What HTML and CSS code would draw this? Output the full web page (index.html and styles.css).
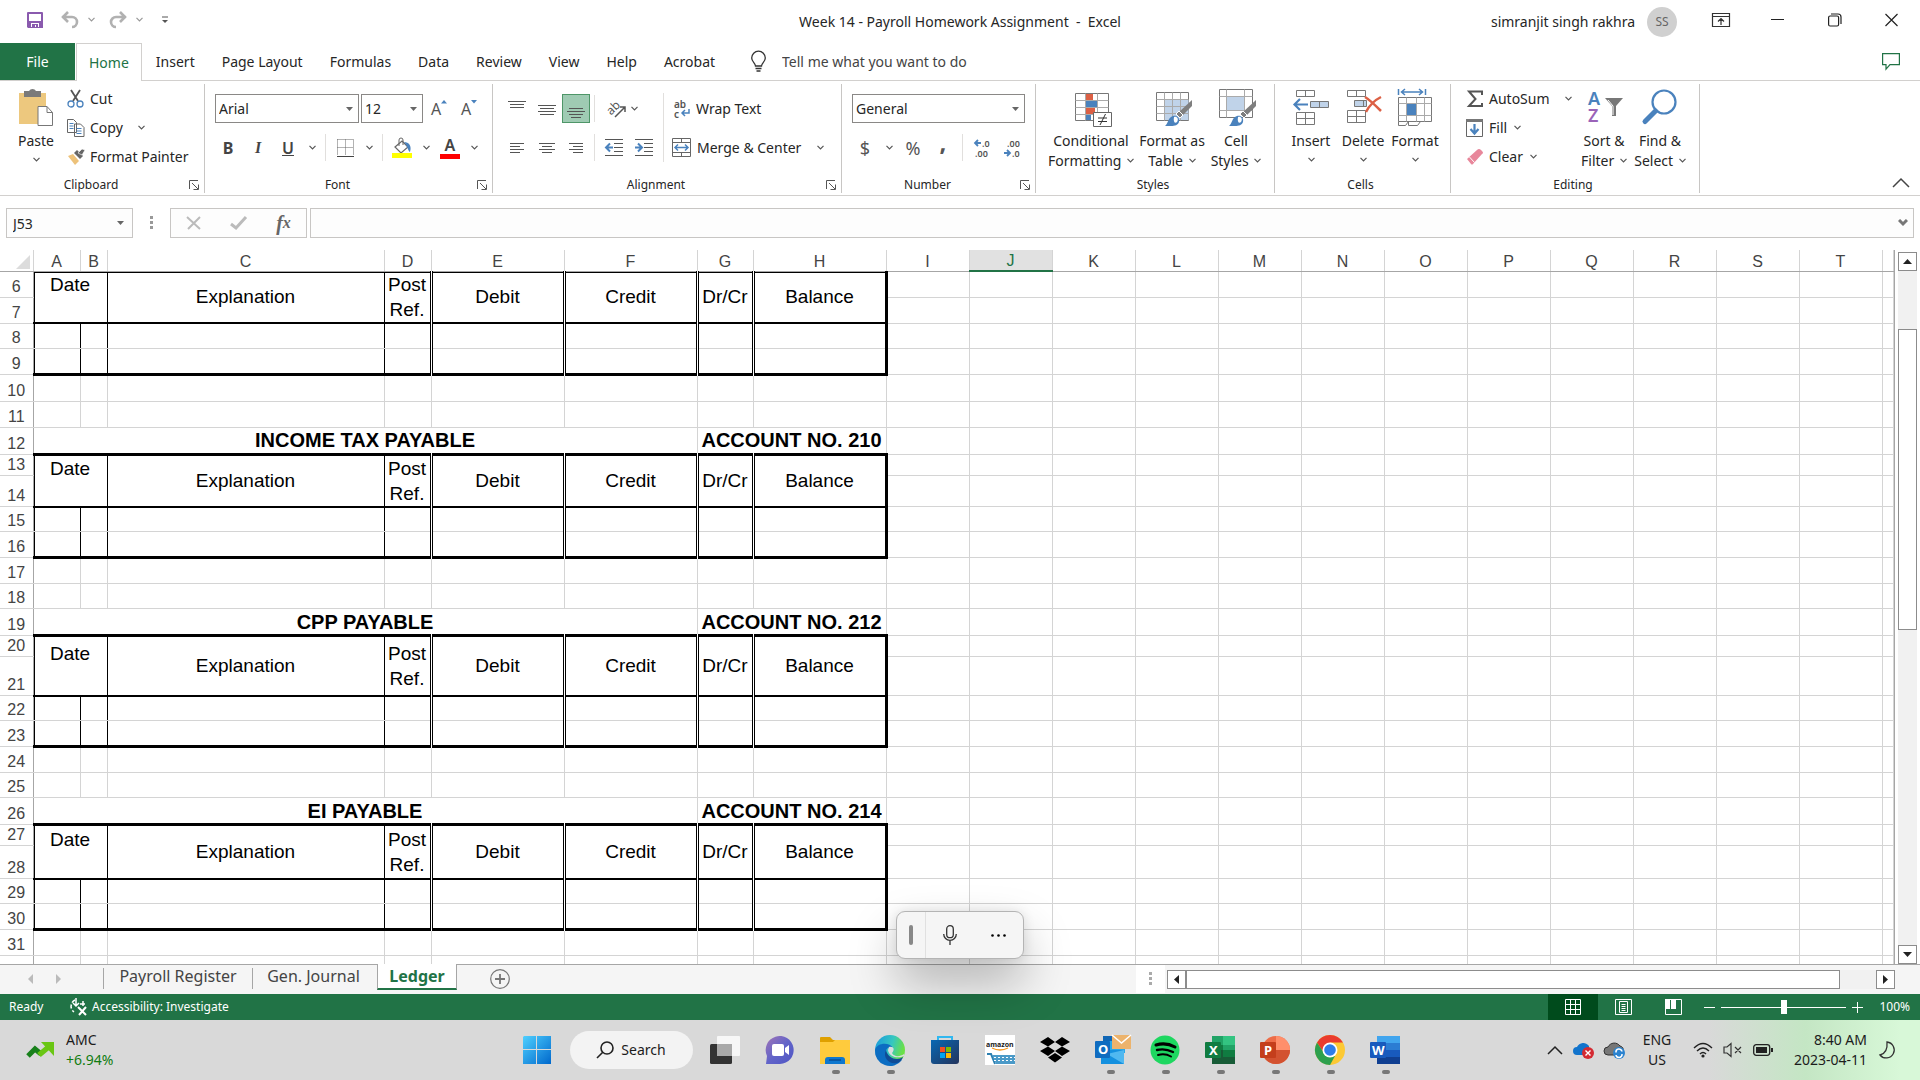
FILE: index.html
```html
<!DOCTYPE html>
<html lang="en">
<head>
<meta charset="utf-8">
<title>Week 14 - Payroll Homework Assignment - Excel</title>
<link rel="stylesheet" href="styles.css">
</head>
<body>
<svg class="defs" aria-hidden="true">
  <symbol id="caret" viewBox="0 0 7 5"><path d="M.5 .8l3 3 3-3" fill="none" stroke="#555" stroke-width="1.2"/></symbol>
  <symbol id="launch" viewBox="0 0 10 10"><path d="M.5 9V.5H9M3 3l6 6M9.500 4.500v5h-5" fill="none" stroke="#555"/></symbol>
  <symbol id="brush" viewBox="0 0 28 28"><path d="M27 1v6l-9 9-4-3z" fill="#7f7f7f"/><path d="M14 12l4 4-3 3-4-4z" fill="#7f7f7f" stroke="#fff"/><path d="M0 27c3-2 3-9 8-10 4-1 7 2 6 6-1 3-4 4-8 4z" fill="#4a82bd"/><path d="M9 18c3-1 5 2 3 5-2 2-4 0-3-5z" fill="#fff"/></symbol>
</svg>

<div class="app">
<header class="titlebar">
  <div class="quick">
    <button class="ib save" aria-label="Save"><svg width="16" height="16"><path d="M0 1a1 1 0 0 1 1-1h14a1 1 0 0 1 1 1v15H1l-1-1z" fill="#8a5aae"/><path d="M2 2h12v7H2zM4 11h8v4H4z" fill="#fff"/><path d="M5 12h6v3H9v-2H8v2H5z" fill="#8a5aae"/></svg></button>
    <button class="ib undo" aria-label="Undo"><svg width="18" height="16"><path d="M1 5h10a5 5 0 0 1 0 10M7 0L2 5l5 5" fill="none" stroke="#b1b1b1" stroke-width="2.600"/></svg><svg class="caret pale"><use href="#caret"/></svg></button>
    <button class="ib redo" aria-label="Redo"><svg width="18" height="16"><path d="M17 5H7a5 5 0 0 0 0 10M11 0l5 5-5 5" fill="none" stroke="#b1b1b1" stroke-width="2.600"/></svg><svg class="caret pale"><use href="#caret"/></svg></button>
    <button class="ib" aria-label="Customize toolbar"><svg width="6" height="8"><path d="M0 1h6" stroke="#555"/><path d="M0 4h6L3 7z" fill="#555"/></svg></button>
  </div>
  <h1 class="doc">Week 14 - Payroll Homework Assignment&nbsp; -&nbsp; Excel</h1>
  <div class="account"><span>simranjit singh rakhra</span><span class="avatar">SS</span></div>
  <div class="wins">
    <button aria-label="Ribbon display"><svg width="18" height="14"><path d="M.5.5h17v13H.5zM.5 3.500h17M9 12V6M6 8.500L9 5.500l3 3" fill="none" stroke="#333" stroke-width="1.200"/></svg></button>
    <button aria-label="Minimize"><svg width="13" height="14"><path d="M0 6.500h13" stroke="#222"/></svg></button>
    <button aria-label="Restore"><svg width="14" height="14"><rect x=".6" y="3" width="10" height="10" rx="1.500" fill="none" stroke="#222" stroke-width="1.200"/><path d="M3 1h7q3 0 3 3v7" fill="none" stroke="#222" stroke-width="1.200"/></svg></button>
    <button aria-label="Close"><svg width="13" height="14"><path d="M.5 1l12 12M12.500 1l-12 12" stroke="#222" stroke-width="1.200"/></svg></button>
  </div>
</header>

<nav class="tabs">
  <button class="file">File</button>
  <button class="on">Home</button><button>Insert</button><button>Page Layout</button><button>Formulas</button><button>Data</button><button>Review</button><button>View</button><button>Help</button><button>Acrobat</button>
  <label class="tell"><svg width="15" height="21"><path d="M4.500 15c0-3-3.800-4-3.800-8A6.700 6.700 0 0 1 14.300 7c0 4-3.800 5-3.800 8zM4.500 17.500h6M5.500 20h4" fill="none" stroke="#333" stroke-width="1.300"/></svg><input type="text" placeholder="Tell me what you want to do" aria-label="Tell me what you want to do"></label>
  <button class="comment" aria-label="Comments"><svg width="18" height="17"><path d="M.6.600h16.800v11H8l-4 4.500v-4.500H.6z" fill="none" stroke="#217346" stroke-width="1.200"/></svg></button>
</nav>

<section class="ribbon">
  <div class="group clip">
    <div class="body">
      <button class="big paste"><svg width="36" height="40"><path d="M1 5h27v31H1z" fill="#edc87e"/><path d="M6 3h5a4 4 0 0 1 7 0h5v6H6z" fill="#7a7a7a"/><path d="M20 18.500h9l5.500 6V37.500H20z" fill="#fff" stroke="#777"/><path d="M29 18.500v6h5.500" fill="none" stroke="#777"/></svg><span>Paste</span><svg class="caret"><use href="#caret"/></svg></button>
      <div class="stack">
        <button><svg width="18" height="18"><path d="M4 0l7 11M13 0L6 11" stroke="#555" stroke-width="1.800"/><circle cx="4" cy="14" r="3" fill="none" stroke="#4a82bd" stroke-width="1.300"/><circle cx="13" cy="14" r="3" fill="none" stroke="#4a82bd" stroke-width="1.300"/></svg>Cut</button>
        <button><svg width="18" height="18"><path d="M.5.500h6l3 3v10h-9zM7.500 5h6l3.500 3.500v9H7.500z" fill="#fff" stroke="#666"/><path d="M2.500 4.500h4M2.500 7h4M2.500 9.500h4M9.500 9.500h5M9.500 12h5M9.500 14.500h5" stroke="#4a82bd"/></svg>Copy<svg class="caret far"><use href="#caret"/></svg></button>
        <button><svg width="18" height="18"><path d="M1 8l5-2 6 7-4 4z" fill="#edc27a"/><path d="M7 5l3-3 6 6-3 3z" fill="#666"/><path d="M11 5l4-4 3 1-3 5z" fill="#666" stroke="#fff" stroke-width=".6"/></svg>Format Painter</button>
      </div>
    </div>
    <footer>Clipboard<svg class="launch"><use href="#launch"/></svg></footer>
  </div>

  <div class="group font">
    <div class="body rows">
      <div class="line combos">
        <select class="face" aria-label="Font"><option>Arial</option></select>
        <select class="size" aria-label="Font size"><option>12</option></select>
        <button class="ab">A<svg width="6" height="4"><path d="M0 3.500L3 0l3 3.500z" fill="#4a82bd"/></svg></button>
        <button class="ab">A<svg width="6" height="4"><path d="M0 0h6L3 3.500z" fill="#4a82bd"/></svg></button>
      </div>
      <div class="line marks">
        <button class="w30"><b>B</b></button><button class="w30"><i>I</i></button><button class="w30"><u>U</u></button><button class="w18" aria-label="Underline options"><svg class="caret"><use href="#caret"/></svg></button>
        <span class="sep"></span>
        <button class="w30" aria-label="Borders"><svg width="17" height="18"><path d="M.5.500h16v16M.5.500v16M8.500.500v16M.5 8.500h16" fill="none" stroke="#666" stroke-dasharray="1 1"/><path d="M0 17.500h17" stroke="#444"/></svg></button><button class="w18" aria-label="Border options"><svg class="caret"><use href="#caret"/></svg></button>
        <span class="sep"></span>
        <button class="w30" aria-label="Fill colour"><svg width="20" height="20"><path d="M3 9l7-6 6 6-7 6z" fill="#fff" stroke="#666" stroke-width="1.200"/><path d="M7 8V2a2 2 0 0 1 4 0v5" fill="none" stroke="#666"/><path d="M12 4c5 0 8 4 6 10-2-1-2-5-6-10z" fill="#4a82bd"/><path d="M0 15h20v5H0z" fill="#ff0"/></svg></button><button class="w18" aria-label="Fill colour options"><svg class="caret"><use href="#caret"/></svg></button>
        <button class="colour">A</button><button class="w18" aria-label="Font colour options"><svg class="caret"><use href="#caret"/></svg></button>
      </div>
    </div>
    <footer>Font<svg class="launch"><use href="#launch"/></svg></footer>
  </div>

  <div class="group align">
    <div class="body">
      <div class="rows">
        <div class="line">
          <button class="w30" aria-label="Top align"><svg width="18" height="18"><path d="M0 1.500h18M2 4.500h14M2 7.500h14" stroke="#555"/></svg></button><button class="w30" aria-label="Middle align"><svg width="18" height="18"><path d="M0 5.500h18M2 8.500h14M0 11.500h18M2 14.500h14" stroke="#555"/></svg></button><button class="w28 sel" aria-label="Bottom align"><svg width="18" height="18"><path d="M2 8.500h14M0 11.500h18M2 14.500h14M4 17.500h10" stroke="#555"/></svg></button>
          <span class="sep"></span>
          <button class="w46" aria-label="Orientation"><svg width="18" height="18"><text x="-1" y="12" transform="rotate(-45 6 8)" class="rot">ab</text><path d="M8 17L18 7M13 7h5v5" fill="none" stroke="#555" stroke-width="1.500"/></svg><svg class="caret"><use href="#caret"/></svg></button>
        </div>
        <div class="line">
          <button class="w30" aria-label="Align left"><svg width="14" height="12"><path d="M0 1.500h14M0 4.500h10M0 7.500h14M0 10.500h10" stroke="#555"/></svg></button><button class="w30" aria-label="Center"><svg width="16" height="12"><path d="M0 1.500h16M3 4.500h10M0 7.500h16M3 10.500h10" stroke="#555"/></svg></button><button class="w28" aria-label="Align right"><svg width="14" height="12"><path d="M0 1.500h14M4 4.500h10M0 7.500h14M4 10.500h10" stroke="#555"/></svg></button>
          <span class="sep"></span>
          <button class="w30" aria-label="Decrease indent"><svg width="18" height="17"><path d="M0 .5h18M9 4.500h9M9 8.500h9M9 12.500h9M0 16.500h18" stroke="#555"/><path d="M1 8.500h7M5 4.500l-4 4 4 4" fill="none" stroke="#4a82bd" stroke-width="2"/></svg></button><button class="w30" aria-label="Increase indent"><svg width="18" height="17"><path d="M0 .5h18M9 4.500h9M9 8.500h9M9 12.500h9M0 16.500h18" stroke="#555"/><path d="M0 8.500h7M3 4.500l4 4-4 4" fill="none" stroke="#4a82bd" stroke-width="2"/></svg></button>
        </div>
      </div>
      <span class="sep tall"></span>
      <div class="rows wide">
        <div class="line"><button class="txt"><svg width="18" height="18"><text x="2" y="8" class="sm">ab</text><text x="2" y="18" class="sm">c</text><path d="M17 9v4h-6M13 10l-3 3 3 3" fill="none" stroke="#4a82bd" stroke-width="1.500"/></svg>Wrap Text</button></div>
        <div class="line"><button class="txt"><svg width="19" height="19"><path d="M.5.500h18v18H.5zM.5 4.500h18M.5 14.500h18M9.500.500v4M9.500 14.500v4" fill="none" stroke="#666"/><path d="M3 9.500h13M6 6.500l-3 3 3 3M13 6.500l3 3-3 3" fill="none" stroke="#4a82bd" stroke-width="1.500"/></svg>Merge &amp; Center<svg class="caret far"><use href="#caret"/></svg></button></div>
      </div>
    </div>
    <footer>Alignment<svg class="launch"><use href="#launch"/></svg></footer>
  </div>

  <div class="group number">
    <div class="body rows">
      <div class="line combos"><select class="fmt" aria-label="Number format"><option>General</option></select></div>
      <div class="line glyphs">
        <button class="w30">$</button><button class="w18" aria-label="Currency options"><svg class="caret"><use href="#caret"/></svg></button><button class="w30">%</button><button class="w30 comma">,</button>
        <span class="sep"></span>
        <button class="w30" aria-label="Increase decimal"><svg width="16" height="18"><text x="8" y="8" class="dec">.0</text><text x="1" y="18" class="dec">.00</text><path d="M1 4h6M4 1L1 4l3 3" fill="none" stroke="#4a82bd" stroke-width="1.800"/></svg></button><button class="w30" aria-label="Decrease decimal"><svg width="16" height="18"><text x="3" y="8" class="dec">.00</text><text x="8" y="18" class="dec">.0</text><path d="M0 14h6M3 11l3 3-3 3" fill="none" stroke="#4a82bd" stroke-width="1.800"/></svg></button>
      </div>
    </div>
    <footer>Number<svg class="launch"><use href="#launch"/></svg></footer>
  </div>

  <div class="group styles">
    <div class="body">
      <button class="big w90"><svg width="38" height="40"><path d="M3.500 5.500h33v27h-33z" fill="#fff" stroke="#777"/><path d="M3.500 12.500h33M3.500 19.500h33M3.500 26.500h33M13.500 5.500v27M25.500 5.500v27" stroke="#aaa"/><path d="M14 6h7v6h-7zM14 20h9v6h-9z" fill="#dc6045"/><path d="M14 13h11v6H14zM14 27h5v5h-5z" fill="#4a82bd"/><path d="M21.500 24.500h18v14h-18z" fill="#fff" stroke="#666"/><path d="M26 30h9M26 33.500h9M33.500 26l-5.500 11" stroke="#333"/></svg><span>Conditional</span><span>Formatting <svg class="caret"><use href="#caret"/></svg></span></button>
      <button class="big w72"><svg width="38" height="40"><path d="M3.500 4.500h32v28h-32z" fill="#fff" stroke="#777"/><path d="M11.500 12h24v20h-24z" fill="#c0d3e9"/><path d="M3.500 11.500h32M3.500 18.500h32M3.500 25.500h32M11.500 4.500v28M19.500 4.500v28M27.500 4.500v28" stroke="#aaa"/><use href="#brush" x="12" y="11" width="28" height="28"/></svg><span>Format as</span><span>Table <svg class="caret"><use href="#caret"/></svg></span></button>
      <button class="big w56"><svg width="38" height="40"><path d="M2.500 1.500h33v28H2.500z" fill="#fff" stroke="#777"/><path d="M10 9h17v13H10z" fill="#c0d3e9"/><path d="M2.500 8.500h33M2.500 22.500h33M9.500 1.500v28M27.500 1.500v28" stroke="#aaa"/><use href="#brush" x="12" y="11" width="28" height="28"/></svg><span>Cell</span><span>Styles <svg class="caret"><use href="#caret"/></svg></span></button>
    </div>
    <footer>Styles</footer>
  </div>

  <div class="group cells">
    <div class="body">
      <button class="big w52"><svg width="38" height="40"><path d="M4.500 2.500h18v6h-18zM13.500 2.500v6M4.500 24.500h18v12h-18zM13.500 24.500v12M4.500 30.500h18" fill="#fff" stroke="#777"/><path d="M18.500 13.500h18v6h-18zM27.500 13.500v6" fill="#c0d3e9" stroke="#777"/><path d="M2 16.500h14M8 11l-5.500 5.500L8 22" fill="none" stroke="#4a82bd" stroke-width="2.200"/></svg><span>Insert</span><svg class="caret"><use href="#caret"/></svg></button>
      <button class="big w52"><svg width="38" height="40"><path d="M3.500 2.500h18v6h-18zM12.500 2.500v6M3.500 22.500h18v12h-18zM12.500 22.500v12M3.500 28.500h18" fill="#fff" stroke="#777"/><path d="M10.500 12.500h12v6h-12zM19.500 12.500v6" fill="#c0d3e9" stroke="#777"/><path d="M21 9c5 3 11 9 16 14M37 9c-6 3-12 9-15 15" fill="none" stroke="#dc6045" stroke-width="2.500"/></svg><span>Delete</span><svg class="caret"><use href="#caret"/></svg></button>
      <button class="big w52"><svg width="38" height="40"><path d="M2.500 9.500h33v24h-33z" fill="#fff" stroke="#777"/><path d="M2.500 15.500h33M2.500 27.500h33M10.500 9.500v24M20.500 9.500v24M28.500 9.500v24" stroke="#aaa"/><path d="M11 16h9v11h-9z" fill="#4a82bd"/><path d="M2.500 33.500v4h7l3-4v4h9l3-4" fill="none" stroke="#777"/><path d="M2.500 1v6M29.500 1v6M5 4h22M9 1L5.500 4 9 7M23 1l3.500 3L23 7" fill="none" stroke="#4a82bd" stroke-width="1.500"/></svg><span>Format</span><svg class="caret"><use href="#caret"/></svg></button>
    </div>
    <footer>Cells</footer>
  </div>

  <div class="group edit">
    <div class="body">
      <div class="stack">
        <button><svg width="18" height="18"><path d="M16 5V1.500H3l6.500 7.500L3 16h13v-3" fill="none" stroke="#555" stroke-width="2"/></svg>AutoSum<svg class="caret far"><use href="#caret"/></svg></button>
        <button><svg width="18" height="18"><path d="M.5.500h16v17H.5z" fill="#fff" stroke="#666"/><path d="M0 0h17v3H0z" fill="#777"/><path d="M8.500 5v9M4.500 10l4 4.500 4-4.500" fill="none" stroke="#4a82bd" stroke-width="2.200"/></svg>Fill<svg class="caret near"><use href="#caret"/></svg></button>
        <button><svg width="18" height="18"><path d="M1 11l10-9q2-2 4 0l1 1q2 2 0 3l-9 10q-1 1-2 0z" fill="#e8879b"/><path d="M3.500 9l5 5.500" stroke="#fff"/></svg>Clear<svg class="caret near"><use href="#caret"/></svg></button>
      </div>
      <button class="big w56"><svg width="38" height="40"><text x="3" y="17" class="az">A</text><text x="3" y="34" class="az zed">Z</text><path d="M20 10h18l-7 8v10h-4V18z" fill="#777"/><path d="M23 12l5 6v9" fill="none" stroke="#fff"/></svg><span>Sort &amp;</span><span>Filter <svg class="caret"><use href="#caret"/></svg></span></button>
      <button class="big w56"><svg width="38" height="40"><circle cx="23" cy="14" r="11.500" fill="none" stroke="#4a82bd" stroke-width="2.200"/><path d="M14.500 23L4 33.500" stroke="#4a82bd" stroke-width="5" stroke-linecap="round"/></svg><span>Find &amp;</span><span>Select <svg class="caret"><use href="#caret"/></svg></span></button>
    </div>
    <footer>Editing</footer>
  </div>
  <button class="collapse" aria-label="Collapse the ribbon"><svg width="18" height="10"><path d="M1 9l8-8 8 8" fill="none" stroke="#444" stroke-width="1.500"/></svg></button>
</section>

<section class="fbar">
  <input class="namebox" value="J53" aria-label="Name box">
  <svg width="3" height="14"><path d="M0 0h3v3H0zM0 5h3v3H0zM0 10h3v3H0z" fill="#999"/></svg>
  <div class="fx">
    <button aria-label="Cancel"><svg width="16" height="14"><path d="M1 1l13 12M14 1L2 13" stroke="#bbb" stroke-width="2"/></svg></button>
    <button aria-label="Enter"><svg width="17" height="14"><path d="M1 8l5 4L16 1" fill="none" stroke="#bbb" stroke-width="3"/></svg></button>
    <button aria-label="Insert function"><em>f</em><sub>x</sub></button>
  </div>
  <input class="formula" aria-label="Formula">
</section>

<main class="sheet">
  <div class="grid">
  <table>
    <colgroup><col class="cn"><col class="ca"><col class="cb"><col class="cc"><col class="ca"><col class="ce"><col class="ce"><col class="cg"><col class="ce"><col class="ci"><col class="ci"><col class="ci"><col class="ci"><col class="ci"><col class="ci"><col class="ci"><col class="ci"><col class="ci"><col class="ci"><col class="ci"><col class="ci"><col></colgroup>
    <thead><tr class="r21"><th class="corner"><svg width="14" height="14"><path d="M14 0v14H0z" fill="#dcdcdc"/></svg></th><th>A</th><th>B</th><th>C</th><th>D</th><th>E</th><th>F</th><th>G</th><th>H</th><th>I</th><th class="cur">J</th><th>K</th><th>L</th><th>M</th><th>N</th><th>O</th><th>P</th><th>Q</th><th>R</th><th>S</th><th>T</th><th></th></tr></thead>
    <tbody>
      <tr class="r26 head cut"><th>6</th><td colspan="2" rowspan="2">Date<br>&nbsp;</td><td rowspan="2">Explanation</td><td rowspan="2">Post<br>Ref.</td><td rowspan="2">Debit</td><td rowspan="2">Credit</td><td rowspan="2">Dr/Cr</td><td rowspan="2">Balance</td><td><td><td><td><td><td><td><td><td><td><td><td><td></tr>
      <tr class="r26"><th>7</th><td><td><td><td><td><td><td><td><td><td><td><td><td></tr>
      <tr class="r25 entry"><th>8</th><td><td><td><td><td><td><td><td><td><td><td><td><td><td><td><td><td><td><td><td><td></tr>
      <tr class="r26 entry last"><th>9</th><td><td><td><td><td><td><td><td><td><td><td><td><td><td><td><td><td><td><td><td><td></tr>
      <tr class="r27"><th>10</th><td><td><td><td><td><td><td><td><td><td><td><td><td><td><td><td><td><td><td><td><td></tr>
      <tr class="r26"><th>11</th><td><td><td><td><td><td><td><td><td><td><td><td><td><td><td><td><td><td><td><td><td></tr>
      <tr class="r27 title"><th>12</th><td colspan="6">INCOME TAX PAYABLE</td><td colspan="2">ACCOUNT NO. 210</td><td><td><td><td><td><td><td><td><td><td><td><td><td></tr>
      <tr class="r21 head"><th>13</th><td colspan="2" rowspan="2">Date<br>&nbsp;</td><td rowspan="2">Explanation</td><td rowspan="2">Post<br>Ref.</td><td rowspan="2">Debit</td><td rowspan="2">Credit</td><td rowspan="2">Dr/Cr</td><td rowspan="2">Balance</td><td><td><td><td><td><td><td><td><td><td><td><td><td></tr>
      <tr class="r31"><th>14</th><td><td><td><td><td><td><td><td><td><td><td><td><td></tr>
      <tr class="r25 entry"><th>15</th><td><td><td><td><td><td><td><td><td><td><td><td><td><td><td><td><td><td><td><td><td></tr>
      <tr class="r26 entry last"><th>16</th><td><td><td><td><td><td><td><td><td><td><td><td><td><td><td><td><td><td><td><td><td></tr>
      <tr class="r26"><th>17</th><td><td><td><td><td><td><td><td><td><td><td><td><td><td><td><td><td><td><td><td><td></tr>
      <tr class="r25"><th>18</th><td><td><td><td><td><td><td><td><td><td><td><td><td><td><td><td><td><td><td><td><td></tr>
      <tr class="r27 title"><th>19</th><td colspan="6">CPP PAYABLE</td><td colspan="2">ACCOUNT NO. 212</td><td><td><td><td><td><td><td><td><td><td><td><td><td></tr>
      <tr class="r21 head"><th>20</th><td colspan="2" rowspan="2">Date<br>&nbsp;</td><td rowspan="2">Explanation</td><td rowspan="2">Post<br>Ref.</td><td rowspan="2">Debit</td><td rowspan="2">Credit</td><td rowspan="2">Dr/Cr</td><td rowspan="2">Balance</td><td><td><td><td><td><td><td><td><td><td><td><td><td></tr>
      <tr class="r39"><th>21</th><td><td><td><td><td><td><td><td><td><td><td><td><td></tr>
      <tr class="r25 entry"><th>22</th><td><td><td><td><td><td><td><td><td><td><td><td><td><td><td><td><td><td><td><td><td></tr>
      <tr class="r26 entry last"><th>23</th><td><td><td><td><td><td><td><td><td><td><td><td><td><td><td><td><td><td><td><td><td></tr>
      <tr class="r26"><th>24</th><td><td><td><td><td><td><td><td><td><td><td><td><td><td><td><td><td><td><td><td><td></tr>
      <tr class="r25"><th>25</th><td><td><td><td><td><td><td><td><td><td><td><td><td><td><td><td><td><td><td><td><td></tr>
      <tr class="r27 title"><th>26</th><td colspan="6">EI PAYABLE</td><td colspan="2">ACCOUNT NO. 214</td><td><td><td><td><td><td><td><td><td><td><td><td><td></tr>
      <tr class="r21 head"><th>27</th><td colspan="2" rowspan="2">Date<br>&nbsp;</td><td rowspan="2">Explanation</td><td rowspan="2">Post<br>Ref.</td><td rowspan="2">Debit</td><td rowspan="2">Credit</td><td rowspan="2">Dr/Cr</td><td rowspan="2">Balance</td><td><td><td><td><td><td><td><td><td><td><td><td><td></tr>
      <tr class="r33"><th>28</th><td><td><td><td><td><td><td><td><td><td><td><td><td></tr>
      <tr class="r25 entry"><th>29</th><td><td><td><td><td><td><td><td><td><td><td><td><td><td><td><td><td><td><td><td><td></tr>
      <tr class="r26 entry last"><th>30</th><td><td><td><td><td><td><td><td><td><td><td><td><td><td><td><td><td><td><td><td><td></tr>
      <tr class="r26"><th>31</th><td><td><td><td><td><td><td><td><td><td><td><td><td><td><td><td><td><td><td><td><td></tr>
      <tr class="r26"><th></th><td><td><td><td><td><td><td><td><td><td><td><td><td><td><td><td><td><td><td><td><td></tr>
    </tbody>
  </table>
  </div>
  <div class="vscroll">
    <button aria-label="Scroll up"><svg width="9" height="5"><path d="M0 5l4.500-5L9 5z" fill="#222"/></svg></button>
    <div class="vtrack"><div class="thumb"></div></div>
    <button aria-label="Scroll down"><svg width="9" height="5"><path d="M0 0h9L4.500 5z" fill="#222"/></svg></button>
  </div>
</main>

<div class="sheets">
  <div class="navs">
    <button aria-label="Previous sheet"><svg width="5" height="10"><path d="M5 0v10L0 5z" fill="#bbb"/></svg></button>
    <button aria-label="Next sheet"><svg width="5" height="10"><path d="M0 0v10l5-5z" fill="#bbb"/></svg></button>
  </div>
  <button class="st first">Payroll Register</button><button class="st second">Gen. Journal</button><button class="st on">Ledger</button>
  <button class="add" aria-label="New sheet"><svg width="20" height="20"><circle cx="10" cy="10" r="9.300" fill="none" stroke="#777" stroke-width="1.200"/><path d="M10 5v10M5 10h10" stroke="#777" stroke-width="1.800"/></svg></button>
  <div class="hs">
    <span class="grip"><svg width="3" height="14"><path d="M0 0h3v3H0zM0 5h3v3H0zM0 10h3v3H0z" fill="#aaa"/></svg></span>
    <button aria-label="Scroll left"><svg width="5" height="9"><path d="M5 0v9L0 4.500z" fill="#222"/></svg></button>
    <div class="htrack"><div class="thumb"></div></div>
    <button aria-label="Scroll right"><svg width="5" height="9"><path d="M0 0v9l5-4.500z" fill="#222"/></svg></button>
  </div>
</div>

<footer class="status">
  <span class="ready">Ready</span>
  <svg width="20" height="18"><path d="M7 2A7 7 0 0 0 6 14" fill="none" stroke="#fff" stroke-width="1.500" stroke-dasharray="4 2"/><path d="M8 0v7M5 5l3 3 3-3M12 6h5M15 3v5" fill="none" stroke="#fff" stroke-width="1.500"/><path d="M10 9l8 8M18 9l-7 8" stroke="#fff" stroke-width="2"/></svg>
  <span>Accessibility: Investigate</span>
  <div class="views">
    <button class="on" aria-label="Normal view"><svg width="16" height="16"><path d="M.5.500h15v15H.5zM.5 5.500h15M.5 10.500h15M5.500.500v15M10.500.500v15" fill="none" stroke="#fff"/></svg></button>
    <button aria-label="Page layout view"><svg width="17" height="16"><path d="M.5.500h16v15H.5zM4.500 2.500h8v11h-8zM6.500 5.500h4M6.500 7.500h4M6.500 9.500h4M6.500 11.500h4" fill="none" stroke="#fff"/></svg></button>
    <button aria-label="Page break view"><svg width="17" height="16"><path d="M.5.500h16v15H.5z" fill="none" stroke="#fff"/><path d="M0 0h5v10H0zM6 0h5v10H6z" fill="#fff"/></svg></button>
  </div>
  <button class="zb" aria-label="Zoom out"><svg width="11" height="11"><path d="M0 5.500h11" stroke="#fff"/></svg></button>
  <input type="range" min="0" max="100" value="50" aria-label="Zoom">
  <button class="zb" aria-label="Zoom in"><svg width="11" height="11"><path d="M0 5.500h11M5.500 0v11" stroke="#fff"/></svg></button>
  <span class="pct">100%</span>
</footer>
</div>

<div class="taskbar">
  <button class="widget"><svg width="28" height="18"><path d="M1 15l7-7 6 5" fill="none" stroke="#18801b" stroke-width="5"/><path d="M12 14L24 4" stroke="#6ac614" stroke-width="5.500"/><path d="M14 1h13v14z" fill="#6ac614"/></svg><span class="two">AMC<span class="gain">+6.94%</span></span></button>
  <div class="apps">
    <button aria-label="Start"><svg width="30" height="30"><defs><linearGradient id="w" x2="1" y2="1"><stop stop-color="#4fd0ff"/><stop offset="1" stop-color="#0068cc"/></linearGradient></defs><path d="M2 1h12v13H1V2zM15 1h14v13H15zM1 15h13v14H1zM15 15h14v14H15z" fill="url(#w)"/></svg></button>
    <button class="search"><svg width="18" height="18"><circle cx="11" cy="7" r="6" fill="none" stroke="#222" stroke-width="1.600"/><path d="M7 11l-6 6" stroke="#222" stroke-width="1.600"/></svg>Search</button>
    <button aria-label="Task view"><svg width="30" height="30"><rect y="9" width="22" height="20" rx="1.500" fill="#333"/><rect x="7" y="1" width="23" height="20" rx="1" fill="#f7f7f7"/><path d="M7 9h15v12H7z" fill="#a9a9a9"/></svg></button>
    <button aria-label="Chat"><svg width="30" height="30"><defs><linearGradient id="ch" x2="1" y2="1"><stop stop-color="#a174b5"/><stop offset=".5" stop-color="#6264c9"/><stop offset="1" stop-color="#4e55c4"/></linearGradient></defs><path d="M1 29l1-8A14 14 0 1 1 15 29z" fill="url(#ch)"/><rect x="7" y="9" width="12" height="12" rx="2" fill="#fff"/><path d="M20 13l4-3v10l-4-3z" fill="#fff"/></svg></button>
    <button class="run" aria-label="File Explorer"><svg width="30" height="30"><path d="M0 3q0-1 1-1h9l3 3h16v5H0z" fill="#dfa000"/><path d="M0 7h13l2-2h15v24H0z" fill="#ffcb3d"/><path d="M5 29v-4q0-3 3-3h14q3 0 3 3v4z" fill="#0f78cf"/><path d="M9 25h12" stroke="#0a4e95" stroke-width="1.500"/></svg></button>
    <button class="run" aria-label="Edge"><svg width="30" height="30"><defs><linearGradient id="e1" x2="1" y2=".3"><stop stop-color="#1998df"/><stop offset=".6" stop-color="#36c7c0"/><stop offset="1" stop-color="#6be046"/></linearGradient></defs><circle cx="15" cy="15" r="15" fill="url(#e1)"/><path d="M0 15C2 7 15 7 18 13c-4-2-8 1-7 6s8 8 16 6A15 15 0 0 1 0 15z" fill="#0c6dc2"/><path d="M11 15c-4 8 4 15 11 13 3-1 5-3 6-6-5 4-15 2-17-7z" fill="#104c96"/><path d="M14 12c5-1 6 3 3 6 2 4 8 4 12 1v2c-6 3-15 1-16-6z" fill="#d9dde0"/></svg></button>
    <button aria-label="Store"><svg width="30" height="30"><defs><linearGradient id="st" x2="1" y2="1"><stop stop-color="#0868b4"/><stop offset="1" stop-color="#23345c"/></linearGradient></defs><path d="M8 6V2h14v4" fill="none" stroke="#30b7ef" stroke-width="2"/><path d="M1 5h28v21q0 3-3 3H4q-3 0-3-3z" fill="url(#st)"/><path d="M10 12h5v5h-5z" fill="#f25022"/><path d="M16 12h5v5h-5z" fill="#7fba00"/><path d="M10 18h5v5h-5z" fill="#00a4ef"/><path d="M16 18h5v5h-5z" fill="#ffb900"/></svg></button>
    <button aria-label="Amazon"><svg width="30" height="30"><path d="M0 0h30v30H0z" fill="#fff"/><text x="1" y="12" class="amz">amazon</text><path d="M7 13q8 4 16 0" fill="none" stroke="#f7981d" stroke-width="1.300"/><path d="M2 19h4l4 10" fill="none" stroke="#2c7fb0" stroke-width="2"/><path d="M7 20h23v9H11z" fill="#4b9ac8"/><path d="M9 22.500h21M9 25.500h21" stroke="#fff" stroke-dasharray="2 2"/></svg></button>
    <button aria-label="Dropbox"><svg width="30" height="30"><path d="M8 2l7 5-7 4.500L0 7zM22 2l8 5-8 4.500L15 7zM0 16l8-4.500 7 4.500-7 5zM15 16l7-4.500 8 4.500-8 5zM8 22.500l7-4.500 7 4.500-7 5z"/></svg></button>
    <button class="run" aria-label="Outlook"><svg width="30" height="30"><path d="M8 1h20v10H8z" fill="#1066b5"/><path d="M14 6h16v12H14z" fill="#28a8ea"/><path d="M6 15h23v14H6z" fill="#1490df"/><path d="M29 15v14L12 19z" fill="#50b8f0"/><rect y="6" width="15" height="17" rx="1" fill="#0f6cc0"/><text x="3" y="19" class="tile">O</text><path d="M17 0h19v14H17z" fill="#ecb36c"/><path d="M17 0l9.500 8L36 0" fill="none" stroke="#fff" stroke-width="1.500"/></svg></button>
    <button class="run" aria-label="Spotify"><svg width="30" height="30"><circle cx="15" cy="15" r="14.500" fill="#1ed760"/><path d="M6 10q10-3 19 2" fill="none" stroke="#000" stroke-width="3" stroke-linecap="round"/><path d="M7 15q8-2 16 2" fill="none" stroke="#000" stroke-width="2.400" stroke-linecap="round"/><path d="M8 20q7-2 13 1.500" fill="none" stroke="#000" stroke-width="2" stroke-linecap="round"/></svg></button>
    <button class="run" aria-label="Excel"><svg width="30" height="30"><path d="M7 1h12v9H7z" fill="#21a366"/><path d="M18 1h12v9H18z" fill="#33c481"/><path d="M7 10h12v9H7z" fill="#107c41"/><path d="M18 10h12v5H18z" fill="#21a366"/><path d="M7 15h23v14H7z" fill="#185c37"/><path d="M18 15h12v7H18z" fill="#107c41"/><rect y="7" width="16" height="16" rx="1" fill="#107c41"/><text x="4" y="20" class="tile">X</text></svg></button>
    <button class="run" aria-label="PowerPoint"><svg width="30" height="30"><circle cx="16" cy="15" r="14" fill="#ed6c47"/><path d="M16 1a14 14 0 0 1 14 14H16z" fill="#ff8f6b"/><path d="M2 15h28a14 14 0 0 1-28 0z" fill="#d35230"/><rect y="7" width="16" height="16" rx="1" fill="#c43e1c"/><text x="4" y="20" class="tile">P</text></svg></button>
    <button class="run" aria-label="Chrome"><svg width="30" height="30"><circle cx="15" cy="15" r="15" fill="#fcc934"/><path d="M2 7.500A15 15 0 0 1 28 7.500H15L9 18z" fill="#ea3b2e"/><path d="M2 7.500L9 18l6 4 5-1-5 9A15 15 0 0 1 2 7.500z" fill="#2da04e"/><circle cx="15" cy="15" r="7.500" fill="#fff"/><circle cx="15" cy="15" r="5.800" fill="#2f7de9"/></svg></button>
    <button class="run" aria-label="Word"><svg width="30" height="30"><path d="M7 1h23v7H7z" fill="#41a5ee"/><path d="M7 8h23v7H7z" fill="#2b7cd3"/><path d="M7 15h23v7H7z" fill="#185abd"/><path d="M7 22h23v7H7z" fill="#103f91"/><rect y="7" width="16" height="16" rx="1" fill="#185abd"/><text x="2" y="20" class="tile">W</text></svg></button>
  </div>
  <div class="tray">
    <svg width="16" height="9"><path d="M1 8l7-7 7 7" fill="none" stroke="#222" stroke-width="1.500"/></svg>
    <svg width="21" height="18"><path d="M4 14a4 4 0 0 1 0-8 7 7 0 0 1 12-1v9z" fill="#1274cc"/><circle cx="15" cy="12" r="6" fill="#d42a32"/><path d="M12.500 9.500l5 5M17.500 9.500l-5 5" stroke="#fff" stroke-width="1.400"/></svg>
    <svg width="21" height="18"><path d="M4 14a4 4 0 0 1 0-8 7 7 0 0 1 12-1q4 1 3 5v4z" fill="#777" stroke="#333"/><circle cx="15" cy="12" r="6" fill="#2b83d0"/><path d="M12 11.500a3 3 0 0 1 6-1M18 13a3 3 0 0 1-6 1" fill="none" stroke="#fff" stroke-width="1.500"/></svg>
    <span class="two lang">ENG<span>US</span></span>
    <svg width="20" height="16"><path d="M1 6q9-9 18 0M4 9q6-6 12 0M7 12q3-3 6 0" fill="none" stroke="#222" stroke-width="1.400"/><circle cx="10" cy="14" r="1.600" fill="#222"/></svg>
    <svg width="20" height="14"><path d="M1 4h3l4-3.500v13L4 10H1zM12 4l6 6M18 4l-6 6" fill="none" stroke="#333" stroke-width="1.200"/></svg>
    <svg width="20" height="12"><rect x=".7" y=".7" width="16" height="10.600" rx="2.500" fill="none" stroke="#222" stroke-width="1.300"/><path d="M3 3h11v6H3zM18 4h2v4h-2z" fill="#222"/></svg>
    <span class="two clock">8:40 AM<span>2023-04-11</span></span>
    <svg width="16" height="18"><path d="M8 1a8 8 0 1 1-7 13q8-2 7-13z" fill="none" stroke="#333" stroke-width="1.300"/></svg>
  </div>
</div>

<div class="voice">
  <span class="hold"></span>
  <button aria-label="Microphone"><svg width="14" height="20"><rect x="3.700" y=".7" width="6.600" height="12" rx="3.300" fill="none" stroke="#333" stroke-width="1.300"/><path d="M.7 9a6.300 6.300 0 0 0 12.600 0M7 15.500V20" fill="none" stroke="#333" stroke-width="1.300"/></svg></button>
  <button aria-label="More"><svg width="15" height="3"><circle cx="1.500" cy="1.500" r="1.300"/><circle cx="7.500" cy="1.500" r="1.300"/><circle cx="13.500" cy="1.500" r="1.300"/></svg></button>
</div>
</body>
</html>
```

FILE: styles.css
```css
* { box-sizing: border-box; }
body { margin: 0; height: 100vh; display: flex; flex-direction: column; overflow: hidden; background: #fff; color: #262626; font: 14px/20px "Noto Sans", sans-serif; }
button, input, select { font: inherit; color: inherit; margin: 0; padding: 0; border: 0; background: none; border-radius: 0; }
button { display: flex; align-items: center; justify-content: center; white-space: nowrap; }
svg { display: block; flex: none; overflow: visible; }
.defs { position: absolute; width: 0; height: 0; }
.caret { width: 7px; height: 5px; }
.pale { opacity: .6; }
.app { flex: 1; min-height: 0; display: flex; flex-direction: column; }

/* title bar */
.titlebar { flex: none; height: 43px; display: grid; grid-template-columns: minmax(0, 1fr) auto minmax(0, 1fr); align-items: center; }
.quick { display: flex; align-items: center; padding-left: 27px; padding-bottom: 4px; gap: 14px; }
.quick .ib { gap: 9px; }
.quick .save { margin-right: 4px; }
.quick .ib:last-child { padding-left: 5px; }
.doc { margin: 0; font-size: 14px; font-weight: 400; grid-column: 2; }
.account { grid-column: 3; grid-row: 1; display: flex; align-items: center; justify-content: flex-end; gap: 12px; padding-right: 243px; }
.avatar { width: 30px; height: 30px; border-radius: 50%; background: #d0d0d0; color: #666; font-size: 12px; line-height: 30px; text-align: center; }
.wins { grid-column: 3; grid-row: 1; justify-self: end; display: flex; padding-bottom: 4px; }
.wins button { width: 57px; height: 36px; }

/* ribbon tabs */
.tabs { flex: none; display: flex; height: 38px; gap: 1px; border-bottom: 1px solid #d2d0ce; align-items: stretch; }
.tabs button { padding: 0 13px; }
.tabs .file { width: 75px; background: #217346; color: #fff; }
.tabs .on { color: #217346; border: 1px solid #d2d0ce; border-bottom: 0; background: #fff; margin-bottom: -1px; padding: 0 12px; }
.tell { display: flex; align-items: center; gap: 16px; margin-left: 22px; }
.tell input { width: 240px; color: #444; }
.tell input::placeholder { color: #444; opacity: 1; }
.tabs .comment { margin-left: auto; padding: 0 20px; }

/* ribbon */
.ribbon { flex: none; display: flex; height: 115px; border-bottom: 1px solid #d2d0ce; padding: 3px 0 2px; }
.group { flex: none; display: flex; flex-direction: column; border-right: 1px solid #c8c6c4; }
.clip { width: 205px; }
.font { width: 288px; }
.align { width: 349px; }
.number { width: 194px; }
.styles { width: 239px; }
.cells { width: 176px; }
.edit { width: 249px; }
.body { flex: none; height: 92px; display: flex; }
.group footer { height: 17px; font-size: 12px; line-height: 17px; text-align: center; position: relative; padding-right: 22px; }
.styles footer, .cells footer, .edit footer { padding-right: 4px; }
.launch { position: absolute; right: 5px; top: 4px; width: 10px; height: 10px; }
.big { flex-direction: column; justify-content: flex-start; padding-top: 4px; line-height: 20px; }
.big > svg:first-child { margin-bottom: 3px; }
.big > .caret { margin-top: 6px; }
.big span .caret { display: inline-block; vertical-align: 3px; margin-left: 2px; }
.paste { width: 56px; margin-left: 8px; }
.stack { display: flex; flex-direction: column; padding-left: 3px; }
.stack button { height: 29px; gap: 5px; justify-content: flex-start; }
.stack .far { margin-left: 10px; }
.stack .near { margin-left: 2px; }
.rows { flex-direction: column; padding-top: 10px; gap: 10px; display: flex; }
.line { display: flex; height: 29px; align-items: center; }
.font .body, .number .body { padding-left: 8px; }
.combos { gap: 2px; padding-left: 2px; }
select { appearance: none; height: 29px; border: 1px solid #8a8886; padding: 0 4px 0 3px; background: #fff url("data:image/svg+xml,%3Csvg xmlns='http://www.w3.org/2000/svg' width='7' height='4'%3E%3Cpath d='M0 0h7L3.500 4z' fill='%23666'/%3E%3C/svg%3E") no-repeat right 5px center; }
.face { width: 144px; }
.size { width: 62px; }
.fmt { width: 173px; }
.ab { width: 28px; font-size: 16px; color: #555; }
.ab svg { margin-bottom: 14px; }
.marks { font-size: 16px; color: #444; }
.marks i { font-family: "Liberation Serif", serif; font-weight: 700; }
.marks u { font-weight: 600; }
.w18 { width: 18px; }
.w28 { width: 28px; }
.w30 { width: 30px; }
.w46 { width: 46px; gap: 6px; }
.line button { height: 29px; flex: none; }
.sep { width: 1px; height: 27px; background: #e1dfdd; margin: 0 4px; flex: none; }
.line .colour { width: 20px; height: 22px; margin: 0 5px; font-weight: 600; line-height: 17px; border: solid #f00; border-width: 0 0 5px; }
.align .body { padding-left: 9px; }
.sel { background: #9fcbb3; border: 1px solid #4e9668; }
.tall { height: 69px; margin: 9px 8px 0 1px; }
.align .rows:first-child { width: 160px; }
.txt { gap: 6px; }
.txt .far { margin-left: 10px; }
.rot { font-size: 12px; fill: #555; }
.sm { font-size: 10px; font-weight: 600; fill: #555; }
.dec { font-size: 9px; font-weight: 600; fill: #555; }
.glyphs { font-size: 18px; color: #555; }
.line .comma { font-size: 24px; font-weight: 700; padding-bottom: 12px; }
.styles .body, .cells .body { padding-left: 10px; }
.w90 { width: 90px; }
.w72 { width: 72px; }
.w56 { width: 56px; }
.w52 { width: 52px; }
.edit .stack { padding-left: 15px; width: 125px; }
.az { font-size: 18px; font-weight: 600; fill: #4a82bd; }
.zed { fill: #9a63b8; }
.collapse { margin: auto 10px 0 auto; height: 20px; }

/* formula bar */
.fbar { flex: none; display: flex; align-items: center; padding: 12px 6px; height: 54px; }
.namebox { width: 127px; height: 30px; border: 1px solid #c8c6c4; padding-left: 6px; background: #fdfdfd url("data:image/svg+xml,%3Csvg xmlns='http://www.w3.org/2000/svg' width='7' height='4'%3E%3Cpath d='M0 0h7L3.500 4z' fill='%23666'/%3E%3C/svg%3E") no-repeat right 8px center; }
.fbar > svg { margin: 0 17px; }
.fx { display: flex; width: 137px; height: 30px; border: 1px solid #c8c6c4; background: #fdfdfd; margin-right: 3px; }
.fx button { flex: 1; font: italic 700 20px/20px "Liberation Serif", serif; color: #666; }
.fx sub { font-size: 16px; }
.formula { flex: 1; height: 30px; border: 1px solid #c8c6c4; background: #fdfdfd url("data:image/svg+xml,%3Csvg xmlns='http://www.w3.org/2000/svg' width='10' height='8'%3E%3Cpath d='M1 1l4 4 4-4' fill='none' stroke='%23777' stroke-width='3'/%3E%3C/svg%3E") no-repeat right 5px center; }

/* worksheet */
.sheet { flex: 1; min-height: 0; display: flex; border-bottom: 1px solid #a6a6a6; }
.grid { flex: 1; min-width: 0; overflow: hidden; border-right: 1px solid #a6a6a6; }
table { width: 100%; table-layout: fixed; border-collapse: collapse; font: 19px/25px "Liberation Sans", Arial, sans-serif; color: #000; }
.cn { width: 33px; }
.ca { width: 47px; }
.cb { width: 27px; }
.cc { width: 277px; }
.ce { width: 133px; }
.cg { width: 56px; }
.ci { width: 83px; }
th, td { padding: 0; text-align: center; vertical-align: middle; border: solid #d4d4d4; border-width: 0 1px 1px 0; white-space: nowrap; }
th { font-size: 16px; line-height: 18px; font-weight: 400; color: #444; vertical-align: bottom; }
thead th { border-bottom-color: #a6a6a6; vertical-align: bottom; }
tbody th { border-right-color: #a6a6a6; padding-bottom: 1px; }
.corner svg { margin: 0 0 2px 16px; }
.cur { background: #e1e1e1; color: #217346; border-bottom: 2px solid #217346; }
.r21 { height: 21px; }
.r25 { height: 25px; }
.r26 { height: 26px; }
.r27 { height: 27px; }
.r31 { height: 31px; }
.r33 { height: 33px; }
.r39 { height: 39px; }
.title td { font-size: 20px; line-height: 22px; font-weight: 700; }
.title td:nth-child(2), .title td:nth-child(3) { border-bottom: 3px solid #000; }
.head td:nth-child(-n+8) { border-right: 1px solid #000; border-bottom: 2px solid #000; }
.head td:nth-child(n+4):nth-child(-n+7) { border-right: 3px double #000; }
.head td:nth-child(8) { border-right: 3px solid #000; }
.cut td:nth-child(-n+8) { box-shadow: inset 0 1px #000; }
.head td:nth-child(2), .entry td:nth-child(2) { box-shadow: inset 1px 0 #000; }
.cut td:nth-child(2) { box-shadow: inset 1px 1px #000; }
.entry td:nth-child(-n+4) { border-right: 1px solid #000; }
.entry td:nth-child(n+5):nth-child(-n+8) { border-right: 3px double #000; }
.entry td:nth-child(9) { border-right: 3px solid #000; }
.last td:nth-child(-n+9) { border-bottom: 3px solid #000; }

/* scroll bars */
.vscroll { width: 25px; padding: 2px 3px 0 3px; display: flex; flex-direction: column; }
.vscroll button, .hs button { width: 19px; height: 19px; border: 1px solid #8c8c8c; background: #fff; flex: none; }
.vtrack { flex: 1; background: #f1f1f1; display: grid; grid-template-rows: 58fr 302fr 315fr; }
.vtrack .thumb { grid-row: 2; }
.thumb { border: 1px solid #8c8c8c; background: #fff; }

/* sheet tabs */
.sheets { flex: none; height: 29px; background: #f5f5f5; display: flex; align-items: flex-start; }
.navs { display: flex; width: 103px; height: 28px; padding-left: 28px; gap: 23px; }
.st { height: 21px; margin-top: 3px; padding-bottom: 6px; font-size: 16px; color: #444; border-left: 1px solid #a6a6a6; }
.first { width: 149px; }
.second { width: 125px; padding-right: 3px; }
.sheets .on { width: 80px; height: 26px; margin: -1px 0 0; padding: 0; background: #fff; color: #217346; font-weight: 700; border: solid #a6a6a6; border-width: 0 1px 2px; border-bottom-color: #217346; }
.add { margin: 4px 0 0 33px; }
.hs { margin-left: auto; width: calc(40% + 16px); display: flex; height: 28px; align-items: center; padding-right: 25px; }
.grip { width: 29px; height: 28px; background: #fff; margin-right: 2px; display: flex; align-items: center; justify-content: center; }
.htrack { flex: 1; height: 19px; background: #f1f1f1; display: grid; grid-template-columns: 655fr 36fr; }

/* status bar */
.status { flex: none; height: 26px; background: #217346; color: #fff; font-size: 12px; display: flex; align-items: center; padding: 0 10px 0 9px; }
.ready { width: 59px; }
.status > svg { margin-right: 4px; }
.views { margin-left: auto; display: flex; align-self: stretch; margin-right: 6px; }
.views button { width: 50px; }
.views .on { background: #004b1c; }
.status input { appearance: none; width: 125px; height: 14px; margin: 0 6px; background: linear-gradient(#fff, #fff) center / 100% 1px no-repeat; }
.status input::-webkit-slider-thumb { appearance: none; width: 6px; height: 14px; background: #fff; }
.pct { width: 47px; text-align: right; }

/* taskbar */
.taskbar { flex: none; height: 60px; display: grid; grid-template-columns: 1fr auto 1fr; align-items: center; background: linear-gradient(90deg, transparent 89%, #c4e6c4 94%, #d8f8d8 99%) #d9d9d9; font-size: 14px; color: #1c1c1c; }
.two { display: flex; flex-direction: column; line-height: 20px; }
.widget { justify-self: start; padding-left: 27px; gap: 11px; text-align: left; }
.gain { color: #107c10; }
.apps { display: flex; align-items: center; padding-left: 2px; }
.apps button { width: 55px; height: 60px; position: relative; }
.apps .search { width: 123px; height: 38px; border-radius: 19px; background: #f3f3f3; margin: 0 5px; gap: 7px; }
.run::after { content: ""; position: absolute; left: 24px; bottom: 6px; width: 8px; height: 4px; border-radius: 2px; background: #777; }
.tile { font-size: 13px; font-weight: 700; fill: #fff; }
.amz { font-size: 7px; font-weight: 700; fill: #222; }
.tray { justify-self: end; display: flex; align-items: center; gap: 10px; padding-right: 25px; }
.lang { width: 44px; text-align: center; margin-right: 4px; }
.clock { width: 84px; text-align: right; margin-right: 2px; }

/* voice typing launcher */
.voice { position: absolute; left: 896px; top: 911px; width: 128px; height: 48px; display: flex; align-items: center; background: #f5f5f5; border: 1px solid #b4b4b4; border-radius: 9px; box-shadow: 0 24px 48px rgba(0, 0, 0, .28), 0 0 12px rgba(0, 0, 0, .1); }
.hold { width: 29px; height: 100%; border-right: 1px solid #e0e0e0; display: flex; align-items: center; justify-content: center; }
.hold::before { content: ""; width: 4px; height: 20px; border-radius: 2px; background: #888; }
.voice button { flex: 1; height: 100%; }
```
